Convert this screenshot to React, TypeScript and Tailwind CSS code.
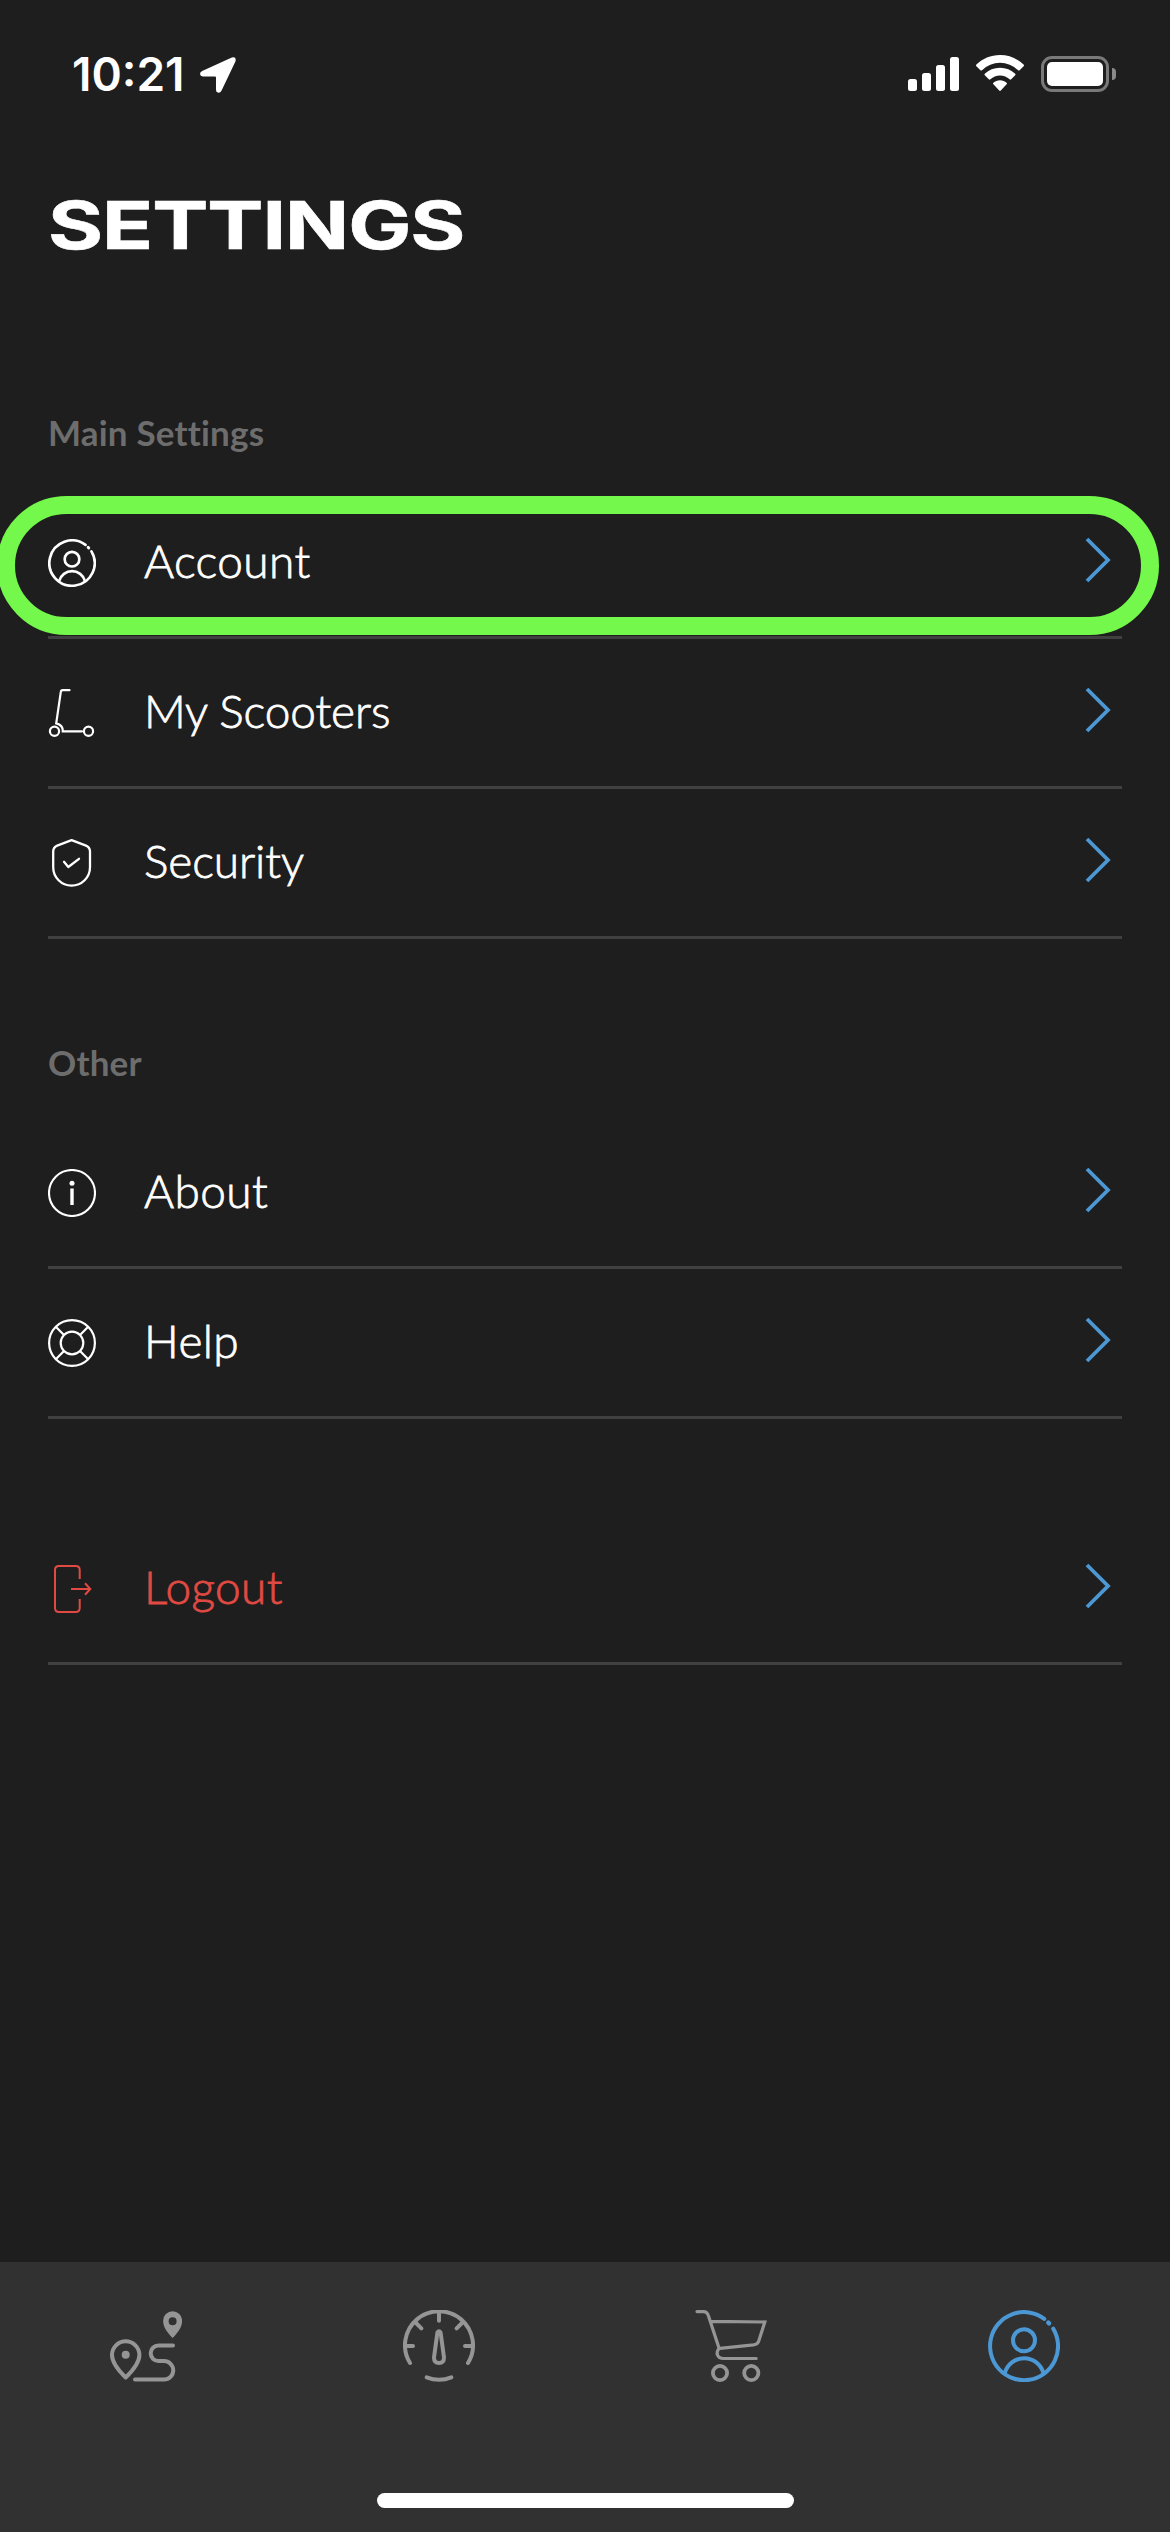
import type { ReactNode } from "react"
import clsx from "clsx"

type IconProps = {
  className?: string
}

function UserIcon({ className }: IconProps) {
  return (
    <svg viewBox="0 0 72 72" fill="none" stroke="currentColor" strokeWidth="4" strokeLinecap="round" className={className}>
      <path d="M56.3 8.8A34 34 0 1 0 65.2 18.6" />
      <path d="M60.3 12.6l.8.8" strokeWidth="4.4" />
      <circle cx="36" cy="30.3" r="11" />
      <path d="M16.8 63a20 20 0 0 1 38.6 0" />
    </svg>
  )
}

function ScooterIcon({ className }: IconProps) {
  return (
    <svg viewBox="0 0 48 48" fill="none" stroke="currentColor" strokeWidth="2.2" strokeLinecap="round" className={className}>
      <path d="M21.5 1.2h-6.8q-1.7 0-1.9 1.7L8.2 34.4q7 1.8 6.6 7.9H34" />
      <circle cx="6.5" cy="42.3" r="4.6" />
      <circle cx="40.5" cy="42.3" r="4.6" />
    </svg>
  )
}

function ShieldIcon({ className }: IconProps) {
  return (
    <svg viewBox="0 0 48 48" fill="none" stroke="currentColor" strokeWidth="2.3" strokeLinecap="round" strokeLinejoin="round" className={className}>
      <path d="M23.6 1.2L38 6.6q4 1.8 4 6v15.7a18.4 18.4 0 0 1-36.8 0V12.6q0-4.2 4-6z" />
      <path d="M16 22.8l4.3 5.2L31 19.8" />
    </svg>
  )
}

function InfoIcon({ className }: IconProps) {
  return (
    <svg viewBox="0 0 48 48" fill="none" stroke="currentColor" strokeWidth="2.1" className={className}>
      <circle cx="24" cy="24" r="23" />
      <path d="M24 19.5V36" strokeWidth="3.4" />
      <circle cx="24" cy="14.2" r="2.5" fill="currentColor" stroke="none" />
    </svg>
  )
}

function HelpIcon({ className }: IconProps) {
  return (
    <svg viewBox="0 0 48 48" fill="none" stroke="currentColor" strokeWidth="2.2" className={className}>
      <circle cx="24" cy="24" r="22.9" />
      <circle cx="24" cy="24" r="11.3" />
      <path d="M7.8 7.8l8.2 8.2M40.2 7.8L32 16M7.8 40.2L16 32M40.2 40.2L32 32" />
    </svg>
  )
}

function LogoutIcon({ className }: IconProps) {
  return (
    <svg viewBox="0 0 48 48" fill="none" stroke="currentColor" strokeWidth="2" className={className}>
      <path d="M31.7 14V5q0-4-4-4H11Q7 1 7 5v38q0 4 4 4h16.700q4 0 4-4v-9" />
      <path d="M23 24h19M37 18.3l5.3 5.7L37 29.7" />
    </svg>
  )
}

function Chevron() {
  return (
    <svg viewBox="0 0 26 46" fill="none" stroke="currentColor" strokeWidth="3.8" className="mr-[11px] mb-[5px] h-[46px] w-[26px] text-[#4c98d5]">
      <path d="M2 2l21 21L2 44" />
    </svg>
  )
}

function RouteIcon() {
  return (
    <svg viewBox="0 0 72 72" fill="none" stroke="currentColor" strokeWidth="4" strokeLinecap="round" className="size-18">
      <path d="M15.7 67.5C10 62 2 53.5 2 45a13.7 13.7 0 0 1 27.4 0c0 8.5-8 17-13.7 22.5z" strokeLinejoin="round" />
      <circle cx="15.7" cy="44.7" r="4" fill="currentColor" stroke="none" />
      <path d="M63 35.5H48.5a7.8 7.8 0 0 0 0 15.6H54a9.25 9.25 0 0 1 0 18.5H25" />
      <path
        d="M62.6 1.2a9.5 9.5 0 0 0-9.5 9.5c0 7 5 12.5 9.5 17.3 4.5-4.8 9.5-10.3 9.5-17.3a9.5 9.5 0 0 0-9.5-9.5zm0 6a4 4 0 1 1 0 8 4 4 0 0 1 0-8z"
        fill="currentColor"
        fillRule="evenodd"
        stroke="none"
      />
    </svg>
  )
}

function GaugeIcon() {
  return (
    <svg viewBox="0 0 72 72" fill="none" stroke="currentColor" strokeWidth="4" strokeLinecap="round" className="size-18">
      <path d="M7 53a34 34 0 1 1 58 0" />
      <path d="M36 3v7.7M2.5 36H10M62 36h7.5M12.5 12.5l5.9 5.9M59.5 12.5l-5.9 5.9" />
      <path d="M34.4 22.5q1.6-2.6 3.2 0L41 47.5q0 5.5-5 5.5t-5-5.5z" strokeLinejoin="round" />
      <path d="M23.7 67.3q12.3 5 24.6 0" />
    </svg>
  )
}

function CartIcon() {
  return (
    <svg viewBox="0 0 72 72" fill="none" stroke="currentColor" strokeWidth="3.2" strokeLinecap="round" className="size-18">
      <path d="M2 1.6h6.5q3.5 0 5 4.4L24 38q.3.5 1 .4l33.5-3.6q4.5-.6 5.5-4.5L69.8 12 16 11.3" />
      <path d="M24 38.5c-3.5 4-2 10 4.5 10h32.7" />
      <circle cx="25" cy="63" r="7.1" strokeWidth="3.8" />
      <circle cx="56.3" cy="63" r="7.1" strokeWidth="3.8" />
    </svg>
  )
}

function StatusBar() {
  return (
    <div className="flex h-[147px] items-start justify-between pt-[55px] pr-[54px] pl-[72px] text-white">
      <div className="flex items-start gap-[15px]">
        <span className="w-[113px] font-['Inter',sans-serif] text-[46px] leading-[39px] font-semibold">10:21</span>
        <svg viewBox="0 0 36 36" className="mt-[2px] size-9" fill="currentColor">
          <path d="M31.8.4Q36.8-.7 35.4 4.6L21.6 33.6Q20.5 35.8 18.5 35.8 16 35.5 16 33V20.500Q16 19.6 15 19.6H2.8Q.3 19.4 0 17 0 15.1 2.2 14z" />
        </svg>
      </div>
      <div className="flex items-start">
        <div className="flex h-9 items-end gap-[5px]">
          <div className="h-3 w-[9px] rounded-[2.5px] bg-white" />
          <div className="h-[18px] w-[9px] rounded-[2.5px] bg-white" />
          <div className="h-[26px] w-[9px] rounded-[2.5px] bg-white" />
          <div className="h-[34px] w-[9px] rounded-[2.5px] bg-white" />
        </div>
        <svg viewBox="0 0 48 36" className="ml-[17px] h-9 w-12" fill="currentColor">
          <path d="M24 0C14.7 0 6.5 3.6.4 9.6q-.8.8 0 1.6l4 4q.8.8 1.6 0a25.7 25.7 0 0 1 36 0q.8.8 1.6 0l4-4q.8-.8 0-1.6C41.5 3.6 33.3 0 24 0z" />
          <path d="M24 12.7c-6 0-11.2 2.2-15.2 6q-.8.8 0 1.6l4 4q.8.7 1.6 0a14 14 0 0 1 19.2 0q.8.7 1.6 0l4-4q.8-.8 0-1.6c-4-3.8-9.2-6-15.2-6z" />
          <path d="M24 25.3c-2.6 0-4.8.9-6.6 2.4q-.8.8 0 1.6l5.8 6.2q.8.8 1.6 0l5.8-6.2q.8-.8 0-1.6c-1.8-1.5-4-2.4-6.6-2.4z" />
        </svg>
        <div className="mt-px ml-[17px] flex items-center">
          <div className="h-9 w-[68px] rounded-[11px] border-3 border-[#797979] p-[3px]">
            <div className="h-full w-full rounded-[5px] bg-white" />
          </div>
          <div className="ml-[3px] h-3 w-1 rounded-r-full bg-[#8a8a8a]" />
        </div>
      </div>
    </div>
  )
}

type RowProps = {
  icon: ReactNode
  label: string
  tight?: boolean
  danger?: boolean
  highlighted?: boolean
}

function SettingsRow({ icon, label, tight, danger, highlighted }: RowProps) {
  return (
    <li className={clsx("relative flex h-[150px] items-center border-b-3 border-[#404040]", danger ? "text-[#e04a43]" : "text-white")}>
      {icon}
      <span
        className={clsx(
          "ml-12 flex-1 pb-1 text-[46px] leading-[48px] font-light [-webkit-text-stroke:0.8px_currentColor]",
          tight ? "tracking-[-0.1px]" : "tracking-[0.4px]"
        )}
      >
        {label}
      </span>
      <Chevron />
      {/* callout drawn over the row */}
      {highlighted && (
        <div className="absolute top-[7px] -left-[51px] h-[139px] w-[1162px] rounded-full border-18 border-[#73f84b]" />
      )}
    </li>
  )
}

function SectionTitle({ children }: { children: string }) {
  return <h2 className="h-[78px] text-[35px] leading-[43px] font-bold tracking-[0.2px] text-[#6d6d6d] [font-variant-ligatures:none]">{children}</h2>
}

export default function App() {
  return (
    <div className="flex h-[2532px] w-[1170px] flex-col overflow-hidden bg-[#1e1e1e] font-['Lato',sans-serif]">
      <StatusBar />
      <main className="flex-1 px-12">
        <h1 className="mt-[38px] h-20 w-fit origin-left scale-x-[1.275] font-['Inter',sans-serif] text-[66px] leading-20 font-bold tracking-[-0.8px] text-white [-webkit-text-stroke:0.6px_currentColor]">
          SETTINGS
        </h1>

        <section className="mt-[146px]">
          <SectionTitle>Main Settings</SectionTitle>
          <ul>
            <SettingsRow icon={<UserIcon className="size-12" />} label="Account" highlighted />
            <SettingsRow icon={<ScooterIcon className="size-12" />} label="My Scooters" tight />
            <SettingsRow icon={<ShieldIcon className="size-12" />} label="Security" tight />
          </ul>
        </section>

        <section className="mt-[102px]">
          <SectionTitle>Other</SectionTitle>
          <ul>
            <SettingsRow icon={<InfoIcon className="size-12" />} label="About" />
            <SettingsRow icon={<HelpIcon className="size-12" />} label="Help" />
          </ul>
        </section>

        <ul className="mt-24">
          <SettingsRow icon={<LogoutIcon className="size-12" />} label="Logout" danger />
        </ul>
      </main>

      <footer className="flex h-[270px] flex-col items-center justify-between bg-[#313131] pt-12 pb-6">
        <nav className="grid w-full grid-cols-4 justify-items-center text-[#959595]">
          <RouteIcon />
          <GaugeIcon />
          <CartIcon />
          <UserIcon className="size-18 text-[#4c98d5]" />
        </nav>
        <div className="h-[15px] w-[417px] rounded-full bg-white" />
      </footer>
    </div>
  )
}
